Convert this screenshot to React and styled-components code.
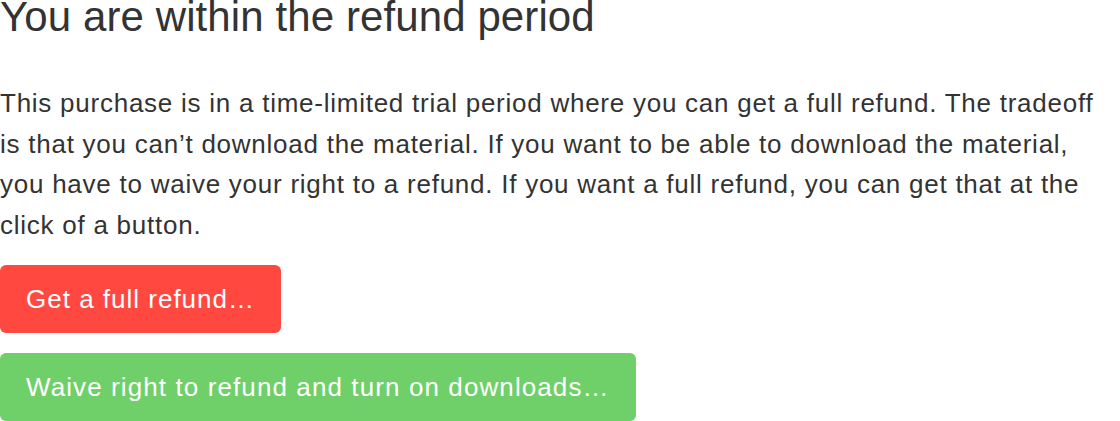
import React from "react";
import styled, { createGlobalStyle } from "styled-components";

const GlobalStyle = createGlobalStyle`
  html, body {
    margin: 0;
    padding: 0;
    background: #fff;
  }
  body {
    font-family: "Liberation Sans", Arial, sans-serif;
    color: #333;
  }
`;

const Page = styled.div`
  display: flex;
  flex-direction: column;
  align-items: flex-start;
`;

const Title = styled.h1`
  margin: 0;
  font-size: 42px;
  font-weight: 400;
  line-height: 34px;
  letter-spacing: 0.1px;
  color: #333;
`;

const Text = styled.p`
  margin: 49px 0 0;
  max-width: 1112px;
  font-size: 26px;
  line-height: 40.5px;
  letter-spacing: 0.75px;
  color: #333;
`;

const Actions = styled.div`
  display: flex;
  flex-direction: column;
  align-items: flex-start;
  gap: 20px;
  margin-top: 20px;
`;

const Button = styled.button`
  height: 68px;
  padding: 0 26px;
  border: none;
  border-radius: 6px;
  background: ${(p) => (p.$variant === "danger" ? "#ff4940" : "#6fcf68")};
  color: #fff;
  font-family: inherit;
  font-size: 26px;
  letter-spacing: ${(p) => (p.$variant === "danger" ? "1px" : "1.1px")};
  cursor: pointer;
`;

export default function App() {
  return (
    <>
      <GlobalStyle />
      <Page>
        <Title>You are within the refund period</Title>
        <Text>
          This purchase is in a time-limited trial period where you can get a
          full refund. The tradeoff is that you can’t download the material. If
          you want to be able to download the material, you have to waive your
          right to a refund. If you want a full refund, you can get that at the
          click of a button.
        </Text>
        <Actions>
          <Button $variant="danger">Get a full refund…</Button>
          <Button $variant="success">
            Waive right to refund and turn on downloads…
          </Button>
        </Actions>
      </Page>
    </>
  );
}
